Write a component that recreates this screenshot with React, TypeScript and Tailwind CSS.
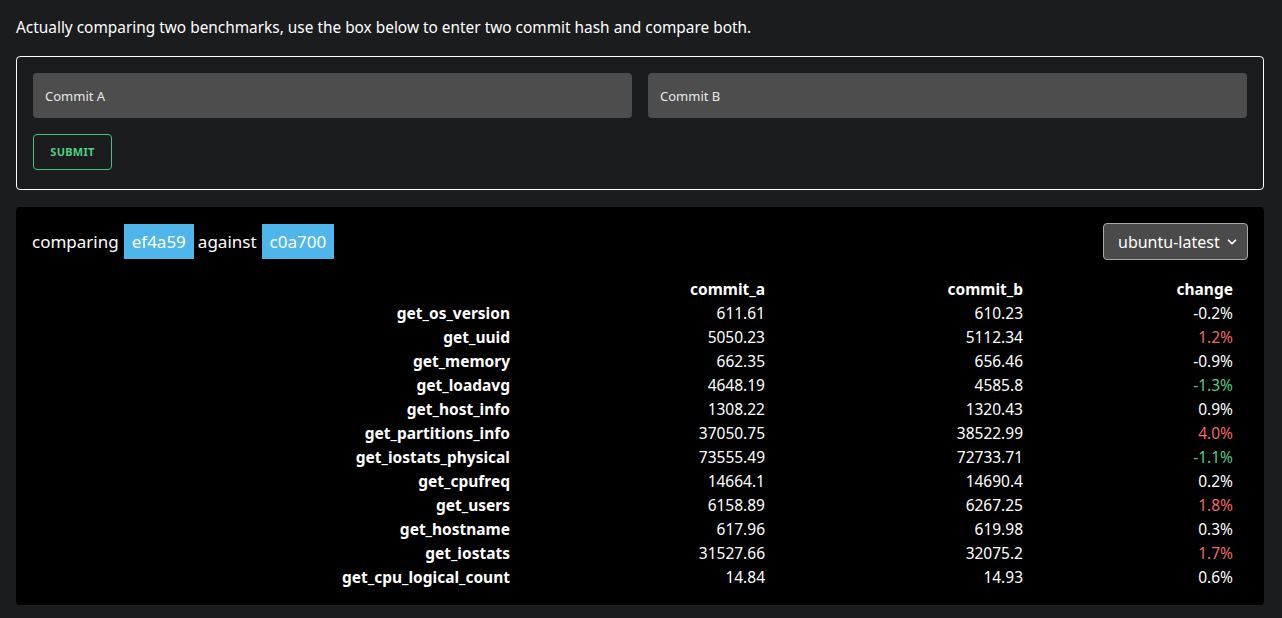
import { ChevronDown } from "lucide-react";

const rows: [string, string, string, string][] = [
  ["get_os_version", "611.61", "610.23", "-0.2%"],
  ["get_uuid", "5050.23", "5112.34", "1.2%"],
  ["get_memory", "662.35", "656.46", "-0.9%"],
  ["get_loadavg", "4648.19", "4585.8", "-1.3%"],
  ["get_host_info", "1308.22", "1320.43", "0.9%"],
  ["get_partitions_info", "37050.75", "38522.99", "4.0%"],
  ["get_iostats_physical", "73555.49", "72733.71", "-1.1%"],
  ["get_cpufreq", "14664.1", "14690.4", "0.2%"],
  ["get_users", "6158.89", "6267.25", "1.8%"],
  ["get_hostname", "617.96", "619.98", "0.3%"],
  ["get_iostats", "31527.66", "32075.2", "1.7%"],
  ["get_cpu_logical_count", "14.84", "14.93", "0.6%"],
];

// > 1% slower is red, < -1% faster is green
function changeColor(v: string) {
  const n = parseFloat(v);
  if (n > 1) return "text-[#f26a61]";
  if (n < -1) return "text-[#4fcf86]";
  return "text-white";
}

export default function App() {
  return (
    <div className="min-h-[618px] bg-[#1b1c1e] pl-4 pr-[18px] pt-4 pb-3 text-white font-['Noto_Sans',sans-serif]">
      <p className="text-[15.4px] leading-6">
        Actually comparing two benchmarks, use the box below to enter two commit hash and compare both.
      </p>

      <div className="mt-4 rounded border border-white px-4 pt-4 pb-[19px]">
        <div className="flex gap-4">
          <input
            placeholder="Commit A"
            className="h-[45px] flex-1 rounded bg-[#4d4d4d] px-3 text-[13px] text-white placeholder:text-[#e8e8e8] outline-none"
          />
          <input
            placeholder="Commit B"
            className="h-[45px] flex-1 rounded bg-[#4d4d4d] px-3 text-[13px] text-white placeholder:text-[#e8e8e8] outline-none"
          />
        </div>
        <button className="mt-4 h-9 w-[79px] rounded border border-[#45c27f] text-[11px] font-bold tracking-wide text-[#4fcf86]">
          SUBMIT
        </button>
      </div>

      <div className="mt-[17px] rounded bg-black px-4 pt-4 pb-4">
        <div className="flex items-center justify-between">
          <div className="flex items-center text-[17px]">
            <span>comparing</span>
            <span className="ml-[5px] flex h-[35px] items-center bg-[#4fb6ec] px-2">ef4a59</span>
            <span className="ml-[4px]">against</span>
            <span className="ml-[5px] flex h-[35px] items-center bg-[#4fb6ec] px-2">c0a700</span>
          </div>
          <div className="flex h-[37px] w-[145px] items-center justify-between whitespace-nowrap rounded border border-[#a8a8a8] bg-[#4a4a4a] pl-[14px] pr-2 text-[16px]">
            <span>ubuntu-latest</span>
            <ChevronDown size={14} strokeWidth={3} />
          </div>
        </div>

        <div className="mt-[17px] grid grid-cols-[478px_255px_258px_210px] text-[15.5px] leading-6">
          <div />
          <div className="text-right font-bold">commit_a</div>
          <div className="text-right font-bold">commit_b</div>
          <div className="text-right font-bold">change</div>
          {rows.map(([name, a, b, c]) => (
            <>
              <div key={name} className="text-right font-bold">{name}</div>
              <div className="text-right">{a}</div>
              <div className="text-right">{b}</div>
              <div className={"text-right " + changeColor(c)}>{c}</div>
            </>
          ))}
        </div>
      </div>
    </div>
  );
}
